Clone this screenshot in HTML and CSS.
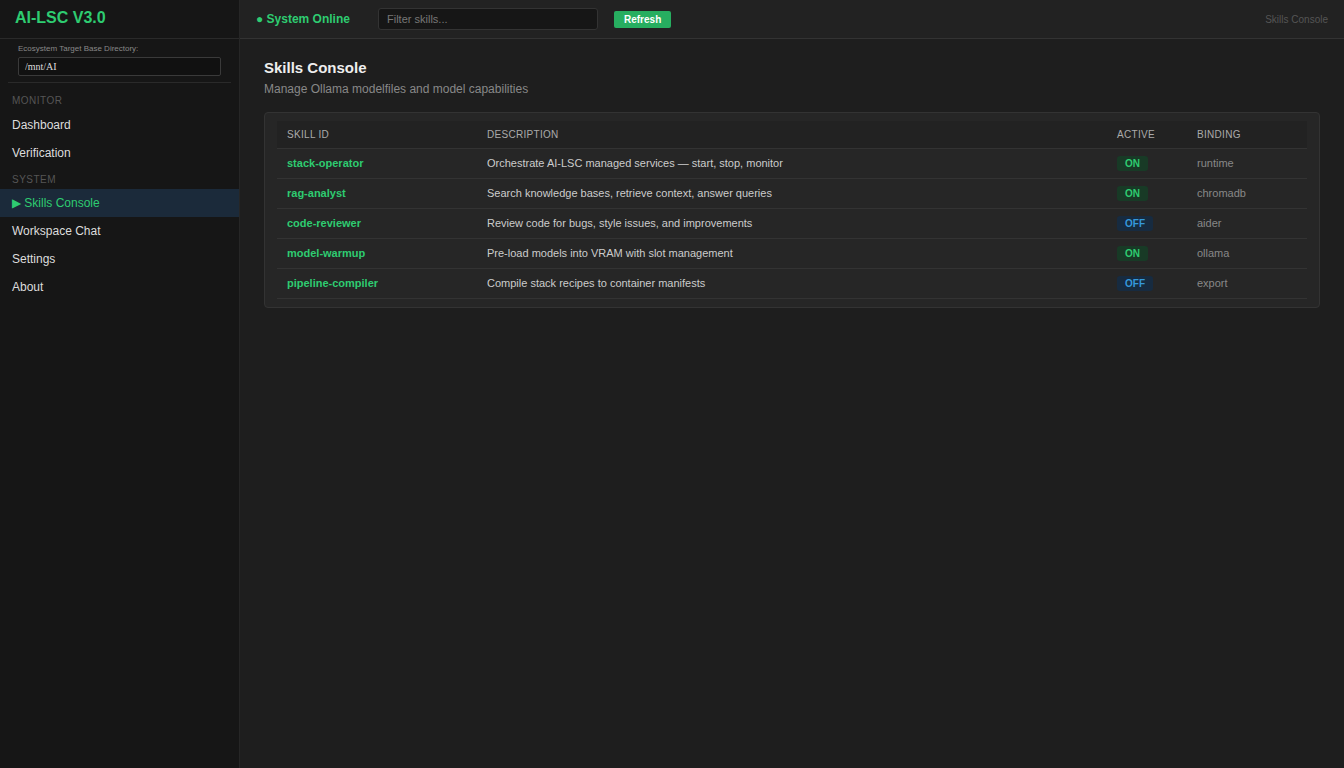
FILE: index.html
```html
<!DOCTYPE html>
<html>
<head>
<meta charset="utf-8">
<link rel="stylesheet" href="styles.css">
</head>
<body>
<div class="app">
  <aside class="sidebar">
    <div class="brand">AI-LSC V3.0</div>
    <div class="dir">
      <label class="dir-label">Ecosystem Target Base Directory:</label>
      <input class="dir-input" type="text" value="/mnt/AI">
    </div>
    <div class="section first">Monitor</div>
    <a class="nav">Dashboard</a>
    <a class="nav">Verification</a>
    <div class="section">System</div>
    <a class="nav active">▶ Skills Console</a>
    <a class="nav">Workspace Chat</a>
    <a class="nav">Settings</a>
    <a class="nav">About</a>
  </aside>
  <main class="main">
    <header class="topbar">
      <span class="status">● System Online</span>
      <input class="filter" type="text" placeholder="Filter skills...">
      <button class="refresh">Refresh</button>
      <span class="crumb">Skills Console</span>
    </header>
    <section class="content">
      <h1 class="title">Skills Console</h1>
      <p class="subtitle">Manage Ollama modelfiles and model capabilities</p>
      <div class="card">
        <table class="table">
          <thead>
            <tr><th class="c-id">Skill ID</th><th>Description</th><th class="c-act">Active</th><th class="c-bind">Binding</th></tr>
          </thead>
          <tbody>
            <tr><td class="sid">stack-operator</td><td>Orchestrate AI-LSC managed services — start, stop, monitor</td><td><span class="badge on">ON</span></td><td class="bind">runtime</td></tr>
            <tr><td class="sid">rag-analyst</td><td>Search knowledge bases, retrieve context, answer queries</td><td><span class="badge on">ON</span></td><td class="bind">chromadb</td></tr>
            <tr><td class="sid">code-reviewer</td><td>Review code for bugs, style issues, and improvements</td><td><span class="badge off">OFF</span></td><td class="bind">aider</td></tr>
            <tr><td class="sid">model-warmup</td><td>Pre-load models into VRAM with slot management</td><td><span class="badge on">ON</span></td><td class="bind">ollama</td></tr>
            <tr><td class="sid">pipeline-compiler</td><td>Compile stack recipes to container manifests</td><td><span class="badge off">OFF</span></td><td class="bind">export</td></tr>
          </tbody>
        </table>
      </div>
    </section>
  </main>
</div>
</body>
</html>
```
FILE: styles.css
```css
* { box-sizing: border-box; }
html, body { margin: 0; height: 100%; }
body {
  font-family: "Liberation Sans", Arial, sans-serif;
  background: #1e1e1e;
  color: #ddd;
}
.app { display: flex; height: 768px; }
.sidebar {
  width: 240px;
  flex: 0 0 240px;
  background: #161616;
  border-right: 1px solid #262626;
  display: flex;
  flex-direction: column;
}
.brand {
  height: 39px;
  padding: 9px 15px 0;
  font-size: 16px;
  font-weight: bold;
  color: #2ecc71;
  border-bottom: 1px solid #2a2a2a;
}
.dir {
  margin: 0 8px;
  padding: 5px 10px 6px;
  border-bottom: 1px solid #2a2a2a;
  display: flex;
  flex-direction: column;
}
.dir-label { font-size: 8px; color: #888; margin-bottom: 4px; }
.dir-input {
  height: 19px;
  background: #111;
  border: 1px solid #3a3a3a;
  border-radius: 2px;
  color: #ddd;
  font-family: "Liberation Serif", serif;
  font-size: 10px;
  padding: 0 6px;
  width: 203px;
}
.section {
  font-size: 10px;
  line-height: 12px;
  text-transform: uppercase;
  letter-spacing: 0.5px;
  color: #555;
  padding: 7px 12px 3px;
}
.section.first { margin-top: 5px; padding-bottom: 4px; }
.nav {
  display: block;
  height: 28px;
  line-height: 28px;
  padding: 0 12px;
  font-size: 12px;
  color: #ddd;
}
.nav.active { background: #1b2a3a; color: #2ecc71; }
.main { flex: 1; display: flex; flex-direction: column; }
.topbar {
  height: 39px;
  background: #222;
  border-bottom: 1px solid #333;
  display: flex;
  align-items: center;
  padding: 0 16px;
}
.status { color: #2ecc71; font-size: 12px; font-weight: bold; width: 122px; }
.filter {
  width: 220px;
  height: 22px;
  background: #161616;
  border: 1px solid #333;
  border-radius: 3px;
  color: #ddd;
  font-family: "Liberation Sans", Arial, sans-serif;
  font-size: 11px;
  padding: 0 8px;
}
.filter::placeholder { color: #777; }
.refresh {
  margin-left: 16px;
  height: 17px;
  padding: 0 10px;
  background: #27ae60;
  color: #fff;
  border: none;
  border-radius: 2px;
  font-family: "Liberation Sans", Arial, sans-serif;
  font-size: 10px;
  font-weight: bold;
}
.crumb { margin-left: auto; font-size: 10px; color: #555; }
.content { padding: 20px 24px; }
.title { margin: 0; font-size: 15px; font-weight: bold; color: #eee; }
.subtitle { margin: 6px 0 16px; font-size: 12px; color: #888; }
.card {
  background: #262626;
  border: 1px solid #333;
  border-radius: 4px;
  padding: 8px 12px;
}
.table { width: 100%; border-collapse: collapse; font-size: 11px; }
.table th {
  text-align: left;
  font-weight: normal;
  text-transform: uppercase;
  color: #aaa;
  font-size: 10px;
  letter-spacing: 0.3px;
  background: #222;
  height: 27px;
  padding: 0 10px;
  border-bottom: 1px solid #333;
}
.c-id { width: 200px; }
.c-act { width: 80px; }
.c-bind { width: 120px; }
.table td {
  height: 30px;
  padding: 0 10px;
  border-bottom: 1px solid #333;
  color: #ccc;
}
.table td.sid { color: #2ecc71; font-weight: bold; }
.table td.bind { color: #888; }
.badge {
  display: inline-block;
  font-size: 10px;
  font-weight: bold;
  padding: 2px 8px;
  border-radius: 3px;
}
.badge.on { background: #183a26; color: #2ecc71; }
.badge.off { background: #172b40; color: #3498db; }
```
